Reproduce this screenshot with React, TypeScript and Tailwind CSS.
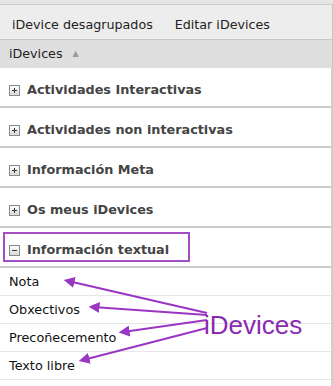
import React from 'react';

const groups = [
  { name: 'Actividades Interactivas', open: false },
  { name: 'Actividades non interactivas', open: false },
  { name: 'Información Meta', open: false },
  { name: 'Os meus iDevices', open: false },
  { name: 'Información textual', open: true },
];

const items = ['Nota', 'Obxectivos', 'Precoñecemento', 'Texto libre'];

const ToggleBox = ({ open }: { open: boolean }) => (
  <span className="relative inline-block w-[11px] h-[11px] border border-[#8a8a8a] bg-gradient-to-b from-white to-[#d8d8d8] shrink-0">
    <span className="absolute left-[2px] top-[4px] w-[5px] h-[1px] bg-[#333]" />
    {!open && <span className="absolute left-[4px] top-[2px] w-[1px] h-[5px] bg-[#333]" />}
  </span>
);

const Arrows = () => {
  const lines = [
    { x1: 207, y1: 313, x2: 68, y2: 281 },
    { x1: 207, y1: 315, x2: 93, y2: 307 },
    { x1: 207, y1: 320, x2: 123, y2: 332 },
    { x1: 207, y1: 328, x2: 83, y2: 360 },
  ];
  return (
    <svg className="absolute left-0 top-0 pointer-events-none" width="333" height="386">
      <defs>
        <marker id="head" markerWidth="5" markerHeight="5" refX="3" refY="2.5" orient="auto" markerUnits="strokeWidth">
          <path d="M0,0 L5,2.5 L0,5 Z" fill="#9a35c4" />
        </marker>
      </defs>
      {lines.map((l, i) => (
        <line key={i} {...l} stroke="#9a35c4" strokeWidth="2.2" markerEnd="url(#head)" />
      ))}
    </svg>
  );
};

export default function App() {
  return (
    <div className="relative w-[333px] h-[386px] overflow-hidden bg-white font-['DejaVu_Sans',sans-serif]">
      {/* top strip */}
      <div className="h-[5px] bg-[#e6e6e6] border-b border-[#cdcdcd]" />

      {/* tabs */}
      <div className="h-[35px] pt-[5px] bg-[#ededed] border-b border-[#c6c6c6] border-r border-r-[#c6c6c6] flex items-center text-[12.7px] text-[#222]">
        <span className="ml-[12px]">iDevice desagrupados</span>
        <span className="ml-[22px]">Editar iDevices</span>
      </div>

      {/* header */}
      <div className="h-[28px] bg-[#dfdfdf] border-r border-[#c6c6c6] flex items-center text-[12.7px] text-[#222] pl-[9px]">
        <span>iDevices</span>
        <span className="ml-[10px] text-[8px] text-[#9a9a9a]">▲</span>
      </div>

      <div className="border-r-2 border-[#cfcfcf]">
        {groups.map((g) => (
          <div key={g.name} className="h-[40px] border-b-2 border-[#cbcbcb] flex items-center">
            <div
              className={`flex items-center gap-[7px] ml-[3px] pl-[4px] pt-[6px] h-[30px] whitespace-nowrap ${
                g.open ? 'w-[187px] border-2 border-[#a44ec4]' : 'border-2 border-transparent'
              }`}
            >
              <ToggleBox open={g.open} />
              <span className="text-[12.8px] font-bold text-[#444]">{g.name}</span>
            </div>
          </div>
        ))}

        {items.map((it) => (
          <div key={it} className="h-[28px] border-b border-[#e6e6e6] flex items-center pl-[9px] text-[12.8px] text-[#111]">
            {it}
          </div>
        ))}
        <div className="h-[20px]" />
      </div>

      <Arrows />
      <div className="absolute left-[204px] top-[310px] text-[26px] leading-[30px] text-[#8a2ab0] font-['Liberation_Sans',sans-serif]">
        iDevices
      </div>
    </div>
  );
}
